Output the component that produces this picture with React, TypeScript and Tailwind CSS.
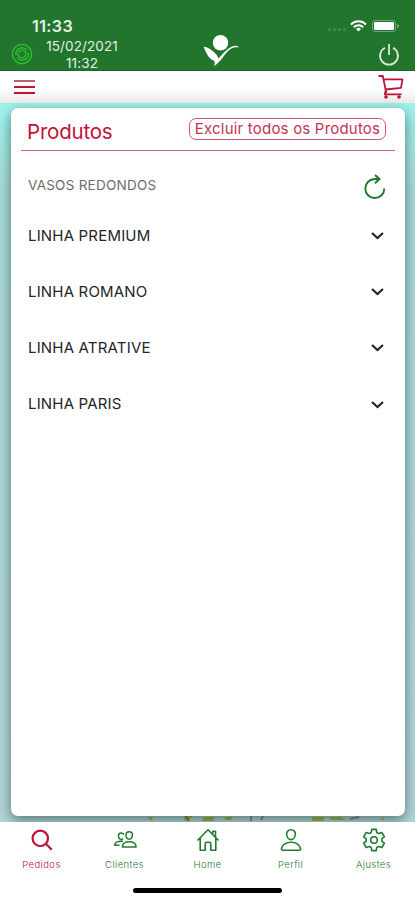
import { useState } from "react";

const lines = ["LINHA PREMIUM", "LINHA ROMANO", "LINHA ATRATIVE", "LINHA PARIS"];

const Logo = () => (
  <svg className="h-8 w-9" viewBox="0 0 36 32" fill="#fff">
    <circle cx="17.500" cy="7.800" r="7.700" />
    <path d="M.5 11.800c3 0 6.500 2 9.500 4.400 3 2.300 4.800 4.300 5.500 7.300C20 18.500 24 14 28.500 11.800c3-1.400 6-1.500 7.500.8-4.500-1-8 .4-11.500 4-3 3-5 6.800-8 9.800-2 2-3.300 3-5.500 4.600.8-2.200 1.300-3.700 0-5.200C5 23.500 3.500 18 .5 11.800Z" />
  </svg>
);

const SyncIcon = () => (
  <svg className="h-[22px] w-[22px]" viewBox="0 0 22 22" fill="none" stroke="#2fc02f">
    <circle cx="11" cy="11" r="9.600" strokeWidth="1.400" />
    <path d="M5.200 12.500a6 6 0 0 1 10.600-5.200M16.800 9.500a6 6 0 0 1-10.600 5.200" strokeWidth="1.400" />
    <path d="M7.300 10.800a3.700 3.700 0 0 1 6.600-2.200l1.300 2.200M14.700 11.200a3.700 3.700 0 0 1-6.600 2.200l-1.300-2.200" strokeWidth="1.300" />
  </svg>
);

const CartIcon = () => (
  <svg className="h-[26px] w-[26px]" viewBox="0 0 26 26" fill="none" stroke="currentColor" strokeWidth="1.800" strokeLinejoin="round">
    <path d="M.5 2h4.300L8.300 19M5.300 5.300h19.200l-1.500 8.500-15.500 1.700M7.800 16l-1 4.300h16.700" />
    <circle cx="8" cy="23" r="1.800" fill="currentColor" stroke="none" />
    <circle cx="21" cy="23" r="1.800" fill="currentColor" stroke="none" />
  </svg>
);

const SearchIcon = () => (
  <svg className="h-6 w-6" viewBox="0 0 24 24" fill="none" stroke="currentColor" strokeWidth="2.200">
    <circle cx="10.300" cy="10.300" r="7.700" />
    <path d="m15.800 15.800 6 6" />
  </svg>
);

const PeopleIcon = () => (
  <svg className="h-6 w-6" viewBox="0 0 24 24" fill="none" stroke="currentColor" strokeWidth="1.500" strokeLinejoin="round">
    <path d="M13 6.500c0-1.900 1-2.800 3.200-2.800s3.200.9 3.200 2.800c0 2.800-1.200 4.700-3.200 4.700S13 9.300 13 6.500Z" />
    <path d="M9.300 19c.2-3.600 2.700-5.200 6.900-5.200s6.700 1.600 6.900 5.200Z" />
    <path d="M10.800 6.800C10.500 5.600 9.600 5 8.200 5c-1.700 0-2.700.9-2.700 2.500 0 2.300 1 3.900 2.700 3.900.7 0 1.300-.3 1.800-.8M10 13.300c-5-.6-8.100.7-8.400 4h5" />
  </svg>
);

const HomeIcon = () => (
  <svg className="h-6 w-6" viewBox="0 0 24 24" fill="none" stroke="currentColor" strokeWidth="1.600" strokeLinejoin="round">
    <path d="M1.500 12.500 12 1.800 22.500 12.500M4.200 10.200v12h5v-6.500a1.500 1.500 0 0 1 1.500-1.500h2.600a1.500 1.500 0 0 1 1.500 1.500v6.500h5v-12M16.800 6.300V3.200h2.700v5.900" />
  </svg>
);

const PersonIcon = () => (
  <svg className="h-6 w-6" viewBox="0 0 24 24" fill="none" stroke="currentColor" strokeWidth="1.600" strokeLinejoin="round">
    <path d="M12 1.800c2.700 0 4.600 1.900 4.400 4.500-.2 2.800-2.100 5.300-4.400 5.300S7.800 9.100 7.600 6.300C7.400 3.700 9.300 1.800 12 1.800Z" />
    <path d="M12 14.300c-4.500 0-8.300 2.100-9.500 6.100-.2.900.2 1.800 1.100 1.800h16.800c.9 0 1.300-.9 1.100-1.800-1.200-4-5-6.100-9.500-6.100Z" />
  </svg>
);

const GearIcon = () => (
  <svg className="h-6 w-6" viewBox="0 0 24 24" fill="none" stroke="currentColor" strokeWidth="1.600" strokeLinejoin="round">
    <path d="M9.800 1.400h4.400l.6 3.100 2 1.100 3-1.100 2.600 4.300-2.500 1.900v2.600l2.500 1.900-2.600 4.300-3-1.100-2 1.100-.6 3.100H9.800l-.6-3.100-2-1.100-3 1.100-2.600-4.300 2.500-1.900v-2.600L1.600 8.800l2.600-4.300 3 1.100 2-1.100Z" />
    <circle cx="12" cy="12" r="3.300" />
  </svg>
);

const tabs = [
  { name: "Pedidos", icon: <SearchIcon /> },
  { name: "Clientes", icon: <PeopleIcon /> },
  { name: "Home", icon: <HomeIcon /> },
  { name: "Perfil", icon: <PersonIcon /> },
  { name: "Ajustes", icon: <GearIcon /> },
];

const Header = () => (
  <header className="h-[71px] border-b border-[#1b6526] bg-[#21752d] text-white">
    <div className="flex h-[36px] items-end justify-between pr-[16px] pl-[32px]">
      <span className="text-[16px] leading-[20px] font-semibold tracking-[0.4px] text-[#e9f4e8]">11:33</span>
      <div className="mb-[4px] flex items-center">
        <div className="mt-[7px] mr-[4px] flex gap-[2px]">
          {[0, 1, 2, 3].map((dot) => (
            <span key={dot} className="h-[3px] w-[3px] rounded-full bg-[#47894e]" />
          ))}
        </div>
        <svg className="mr-[5px] h-[12px] w-[17px]" viewBox="0 0 17 12" fill="none" stroke="#fff" strokeWidth="2">
          <path d="M1 4.500a10.500 10.500 0 0 1 15 0M3.800 7.300a6.600 6.600 0 0 1 9.400 0" />
          <path d="M8.500 11.500 6 9a3.500 3.500 0 0 1 5 0Z" fill="#fff" stroke="none" />
        </svg>
        <div className="h-[12px] w-[24px] rounded-[3px] border border-[#72a477] p-px">
          <div className="h-full rounded-[1px] bg-white" />
        </div>
        <span className="ml-px h-[4px] w-[2px] rounded-r bg-[#72a477]" />
      </div>
    </div>
    <div className="grid h-[34px] grid-cols-3">
      <div className="flex items-start pt-[2px] pl-[11px]">
        <div className="pt-[5px]">
          <SyncIcon />
        </div>
        <div className="ml-[11px] w-[76px] text-center text-[13.500px] leading-[17px] tracking-[0.1px] whitespace-nowrap text-[#e6f0e4]">
          15/02/2021
          <br />
          11:32
        </div>
      </div>
      <div className="-mt-px flex items-start justify-center pl-[27px]">
        <Logo />
      </div>
      <div className="flex items-start justify-end pt-[8px] pr-[15px]">
        <svg className="h-[22px] w-[22px]" viewBox="0 0 22 22" fill="none" stroke="#dcebdc" strokeWidth="1.800">
          <path d="M7 3.800a8.900 8.900 0 1 0 8 0M11 0v11" />
        </svg>
      </div>
    </div>
  </header>
);

const App = () => {
  const [activeTab, setActiveTab] = useState("Pedidos");

  return (
    <div className="flex h-[900px] w-[415px] flex-col overflow-hidden bg-white font-[Inter,sans-serif]">
      <Header />
      <div className="flex h-[32px] items-center justify-between bg-linear-to-b from-white from-50% to-[#ececec] pr-[11px] pl-[14px] text-[#bf1236]">
        <button className="flex w-[21px] flex-col gap-[4px]">
          <span className="h-[2px] bg-[#c95a70]" />
          <span className="h-[2px] bg-[#bf1236]" />
          <span className="h-[2px] bg-[#bf1236]" />
        </button>
        <CartIcon />
      </div>

      <main className="relative h-[719px] bg-linear-to-b from-[#9ef5ee] via-[#a9dcda] via-12% to-[#b4d6d6] px-[11px] pt-[5px]">
        <svg className="absolute bottom-0 left-[145px] h-[6px] w-[240px]" viewBox="0 0 240 6">
          <path d="M3 1h5l-1 3H5ZM38 0h10l-5 5h-3ZM59 1h11l-2 4H57ZM80 1h8l-2 3h-6ZM167 1h13l-2 4h-11ZM184 1h12l4 3h-14ZM236 2h3v2h-3Z" fill="#a3b62c" />
          <path d="M41 0l3 5M106 0v5M118 0l-2 4M205 3l9-2" stroke="#8b6045" strokeWidth="1.500" />
        </svg>
        <section className="relative h-[708px] w-[394px] rounded-[7px] bg-white px-[10px] shadow-[0_4px_13px_rgba(35,65,65,0.65)]">
          <div className="flex h-[43px] items-start justify-between border-b border-[#cf6075] pr-[9px] pl-[6px]">
            <h1 className="pt-[10px] text-[20.500px] leading-[28px] tracking-[-0.2px] text-[#bf1236]">Produtos</h1>
            <button className="mt-[10px] h-[22px] w-[197px] rounded-[7px] border border-[#cc5870] text-[15px] leading-[20px] tracking-[0.200px] whitespace-nowrap text-[#c33451]">
              Excluir todos os Produtos
            </button>
          </div>
          <div className="flex h-[57px] items-end justify-between pr-[9px] pb-[9px] pl-[7px]">
            <h2 className="pb-[4px] text-[13.500px] leading-[20px] tracking-[0.25px] text-[#6b6b6b]">VASOS REDONDOS</h2>
            <svg className="h-[26px] w-[22px]" viewBox="0 0 22 26" fill="none" stroke="#1b7a2b" strokeWidth="1.900">
              <path d="M20.300 15.500A9.500 9.500 0 1 1 10.800 6h4.700M11 2l4.500 4-4.500 4.200" />
            </svg>
          </div>
          {lines.map((line) => (
            <div key={line} className="flex h-[56.200px] items-center justify-between pr-[11px] pl-[7px]">
              <span className="text-[15px] tracking-[0.18px] text-[#252525]">{line}</span>
              <svg className="h-[8px] w-[13px]" viewBox="0 0 13 8" fill="none" stroke="#252525" strokeWidth="2.200">
                <path d="m1 1 5.500 5L12 1" />
              </svg>
            </div>
          ))}
        </section>
      </main>

      <nav className="relative grid h-[66px] grid-cols-5 bg-white">
        {tabs.map((tab) => (
          <button
            key={tab.name}
            onClick={() => setActiveTab(tab.name)}
            className={`flex flex-col items-center pt-[6px] ${activeTab === tab.name ? "text-[#bf1236]" : "text-[#237b32]"}`}
          >
            {tab.icon}
            <span className="mt-[6px] text-[9.500px] leading-[13px] font-light tracking-[0.4px]">{tab.name}</span>
          </button>
        ))}
      </nav>
      <div className="mx-auto h-[5px] w-[149px] rounded-full bg-black" />
    </div>
  );
};

export default App;
